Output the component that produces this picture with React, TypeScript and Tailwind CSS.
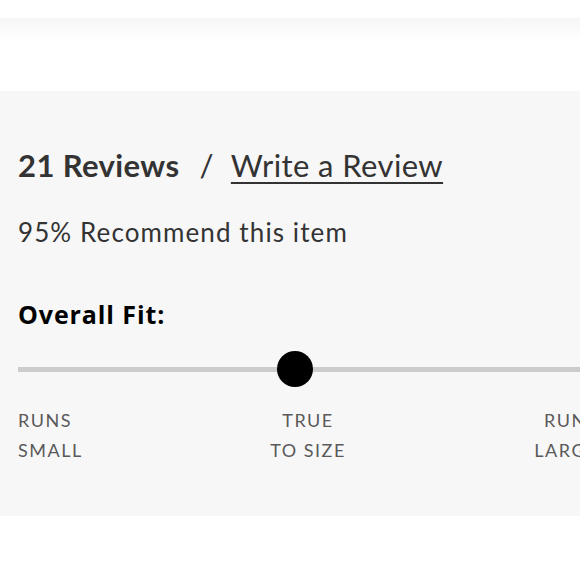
export default function App() {
  return (
    <div className="w-[580px] h-[580px] overflow-hidden bg-white" style={{ fontFamily: "Lato, 'Noto Sans', sans-serif" }}>
      <div className="h-[18px] bg-white" />
      <div className="h-[24px] bg-gradient-to-b from-[#f6f6f6] to-white" />
      <div className="h-[49px] bg-white" />

      <section className="h-[425px] bg-[#f7f7f7] pl-[18px]">
        <div className="w-[580px]">
          <div className="pt-[54px] flex items-baseline text-[31px] leading-[40px] tracking-[0.4px] text-[#333333]">
            <span className="font-bold">21 Reviews</span>
            <span className="ml-[20px] mr-[17px] font-normal">/</span>
            <a className="underline underline-offset-[5px] decoration-[2px]">Write a Review</a>
          </div>

          <p className="mt-[32px] text-[26px] leading-[30px] text-[#333333] tracking-[1.1px]">95% Recommend this item</p>

          <h3
            className="mt-[52px] text-[25px] leading-[30px] font-bold text-black tracking-[0.9px]"
            style={{ fontFamily: "'Open Sans', 'Noto Sans', sans-serif" }}
          >
            Overall Fit:
          </h3>

          <div className="relative mt-[22px] h-[36px] flex items-center">
            <div className="w-full h-[5px] bg-[#cccccc]" />
            <div className="absolute left-[259px] top-0 w-[36px] h-[36px] rounded-full bg-black" />
          </div>

          <div className="mt-[18px] grid grid-cols-3 text-[18px] leading-[30px] tracking-[1.5px] text-[#5a5a5a] uppercase">
            <div className="text-left">Runs<br />Small</div>
            <div className="text-center">True<br />To Size</div>
            <div className="text-right">Runs<br />Large</div>
          </div>
        </div>
      </section>
    </div>
  );
}
